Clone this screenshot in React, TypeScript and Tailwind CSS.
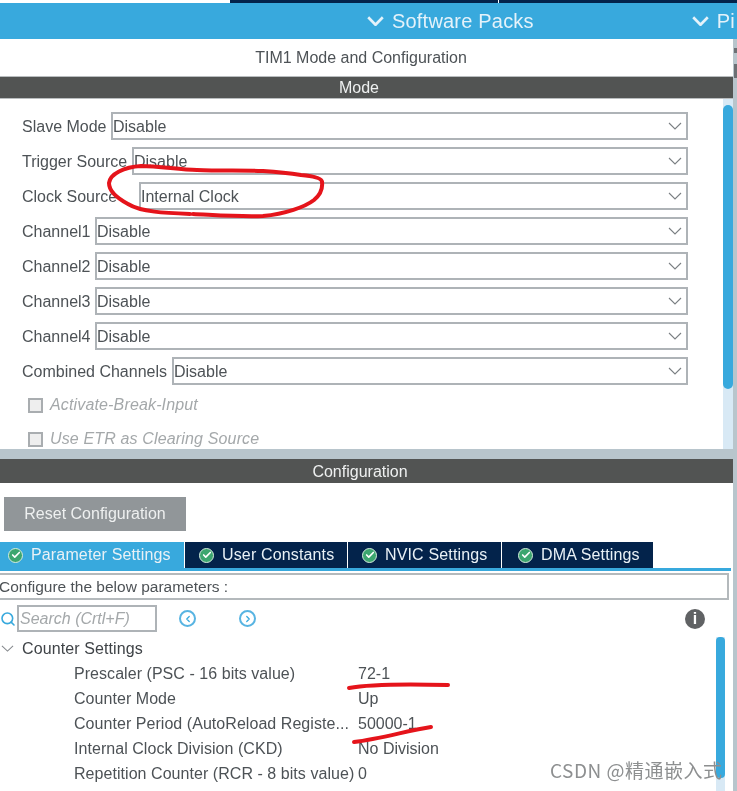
import { ChevronLeft, ChevronRight, Check, Search } from "lucide-react";

const selects = [
  { label: "Slave Mode", value: "Disable", labelWidth: "w-[89px]" },
  { label: "Trigger Source", value: "Disable", labelWidth: "w-[110px]" },
  { label: "Clock Source", value: "Internal Clock", labelWidth: "w-[117px]" },
  { label: "Channel1", value: "Disable", labelWidth: "w-[73px]" },
  { label: "Channel2", value: "Disable", labelWidth: "w-[73px]" },
  { label: "Channel3", value: "Disable", labelWidth: "w-[73px]" },
  { label: "Channel4", value: "Disable", labelWidth: "w-[73px]" },
  { label: "Combined Channels", value: "Disable", labelWidth: "w-[150px]" },
];

const tabs = [
  { label: "Parameter Settings", width: "w-[185px]", inset: "pl-[8px]", active: true },
  { label: "User Constants", width: "w-[163px]", inset: "pl-[14px]", active: false },
  { label: "NVIC Settings", width: "w-[154px]", inset: "pl-[14px]", active: false },
  { label: "DMA Settings", width: "w-[152px]", inset: "pl-[16px]", active: false },
];

const params = [
  { label: "Prescaler (PSC - 16 bits value)", value: "72-1" },
  { label: "Counter Mode", value: "Up" },
  { label: "Counter Period (AutoReload Registe...", value: "50000-1" },
  { label: "Internal Clock Division (CKD)", value: "No Division" },
  { label: "Repetition Counter (RCR - 8 bits value)", value: "0" },
];

function Chevron({ width, height, strokeWidth, className }: { width: number; height: number; strokeWidth: number; className?: string }) {
  return (
    <svg width={width} height={height} viewBox="0 0 14 8" fill="none" stroke="currentColor" strokeWidth={strokeWidth} className={className} preserveAspectRatio="none">
      <path d="M1 1l6 6 6-6" />
    </svg>
  );
}

function SelectRow({ label, value, labelWidth }: { label: string; value: string; labelWidth: string }) {
  return (
    <div className="flex h-[28px] items-center">
      <span className={`${labelWidth} shrink-0 whitespace-nowrap pt-[2px] text-[#4d5256]`}>{label}</span>
      <div className="flex h-[28px] flex-1 items-center justify-between border-2 border-[#aeb3b7] pr-[4px] text-[#4d5256]">
        <span className="pt-[2px]">{value}</span>
        <Chevron width={14} height={8} strokeWidth={1.1} className="text-[#7a7f83]" />
      </div>
    </div>
  );
}

function DisabledCheck({ label }: { label: string }) {
  return (
    <div className="flex h-[34px] items-center gap-[7px] pl-[6px]">
      <div className="h-[15px] w-[15px] border-2 border-[#a9adb0] bg-[#eeeeee]" />
      <span className="italic tracking-[0.15px] text-[#a4a8aa]">{label}</span>
    </div>
  );
}

function Tab({ label, width, inset, active }: { label: string; width: string; inset: string; active: boolean }) {
  return (
    <div
      className={`flex h-[26px] ${width} ${inset} items-center gap-[8px] border-r border-white tracking-[0.15px] text-[#e9f1f6] ${
        active ? "bg-[#38a9dd]" : "bg-[#03234b]"
      }`}
    >
      <div className="flex h-[15px] w-[15px] items-center justify-center rounded-full border border-[#d5ecdd] bg-[#3ca66f]">
        <Check size={10} strokeWidth={4} className="text-white" />
      </div>
      <span className="whitespace-nowrap">{label}</span>
    </div>
  );
}

export default function App() {
  return (
    <div className="relative h-[791px] w-[737px] overflow-hidden bg-white font-['Liberation_Sans',sans-serif] text-[16px] leading-none blur-[0.4px]">
      {/* top strip */}
      <div className="ml-[230px] flex h-[3px] gap-px bg-white">
        <div className="w-[268px] bg-[#03234b]" />
        <div className="flex-1 bg-[#03234b]" />
      </div>

      {/* software packs bar */}
      <div className="flex h-[36px] items-center bg-[#38a9dd] pl-[367px] text-[20px] tracking-[0.2px] text-[#e4f2fa]">
        <Chevron width={17} height={10} strokeWidth={2.2} className="mr-[8px] shrink-0" />
        <span>Software Packs</span>
        <Chevron width={17} height={10} strokeWidth={2.2} className="ml-[158px] mr-[8px] shrink-0" />
        <span>Pi</span>
      </div>

      <div className="flex h-[37px] items-center justify-center pr-[15px] text-[#4d5256]">TIM1 Mode and Configuration</div>

      <div className="flex h-[23px] items-center justify-center border-y border-[#b9bdbf] bg-[#525453] pr-[19px] text-[#eef0f0]">Mode</div>

      {/* mode panel */}
      <div className="flex h-[350px]">
        <div className="flex w-[723px] flex-col gap-[7px] pl-[22px] pr-[35px] pt-[13px]">
          {selects.map((s) => (
            <SelectRow key={s.label} {...s} />
          ))}
          <div className="-mt-[4px] flex flex-col">
            <DisabledCheck label="Activate-Break-Input" />
            <DisabledCheck label="Use ETR as Clearing Source" />
          </div>
        </div>
        <div className="w-[10px] bg-[#d8e9f5] pt-[6px]">
          <div className="h-[284px] rounded-[5px] bg-[#38a9dd]" />
        </div>
      </div>

      <div className="h-[10px] bg-[#b8c5cc]" />
      <div className="flex h-[24px] items-center justify-center bg-[#525453] pr-[17px] pt-[2px] text-[#eef0f0]">Configuration</div>

      <div className="pl-[4px] pt-[14px]">
        <div className="flex h-[34px] w-[182px] items-center justify-center bg-[#919699] text-[#eef0f0]">
          Reset Configuration
        </div>
      </div>

      {/* tabs */}
      <div className="mt-[11px] flex">
        {tabs.map((t) => (
          <Tab key={t.label} {...t} />
        ))}
      </div>
      <div className="mr-[6px] h-[3px] bg-[#38a9dd]" />

      <div className="-ml-[2px] mr-[8px] mt-[2px] flex h-[27px] items-center border-2 border-[#b4b9bc] text-[#4d5256]">
        <span className="-ml-[1px] text-[15.5px]">Configure the below parameters :</span>
      </div>

      {/* search row */}
      <div className="mr-[32px] mt-[5px] flex h-[27px] items-center">
        <Search size={16} strokeWidth={2.4} className="text-[#38a9dd]" />
        <div className="ml-[1px] flex h-[27px] w-[140px] items-center border-2 border-[#aeb3b7] pl-[1px] italic text-[#a4a8aa]">
          Search (Crtl+F)
        </div>
        <div className="ml-[22px] flex h-[17px] w-[17px] items-center justify-center rounded-full border-2 border-[#58b4e2]">
          <ChevronLeft size={10} strokeWidth={3} className="text-[#38a9dd]" />
        </div>
        <div className="ml-[43px] flex h-[17px] w-[17px] items-center justify-center rounded-full border-2 border-[#58b4e2]">
          <ChevronRight size={10} strokeWidth={3} className="text-[#38a9dd]" />
        </div>
        <div className="ml-auto flex h-[20px] w-[20px] items-center justify-center rounded-full bg-[#606264] text-[16px] font-bold text-white">
          i
        </div>
      </div>

      {/* counter settings */}
      <div className="flex">
        <div className="w-[716px]">
          <div className="mt-[4px] flex h-[25px] items-center tracking-[0.1px] text-[#3f4347]">
            <Chevron width={13} height={7} strokeWidth={1.1} className="ml-[1px] mr-[8px] text-[#85898d]" />
            Counter Settings
          </div>
          {params.map((p) => (
            <div key={p.label} className="flex h-[25px] items-center pl-[74px] text-[#4d5256]">
              <span className="w-[284px] shrink-0 whitespace-nowrap tracking-[0.05px]">{p.label}</span>
              <span>{p.value}</span>
            </div>
          ))}
        </div>
        <div className="mt-[5px] h-[154px] w-[9px] bg-[#d8e9f5]">
          <div className="h-[141px] rounded-[4px] bg-[#38a9dd]" />
        </div>
      </div>

      {/* gutter on the right edge, with the sash grip marks */}
      <div className="absolute bottom-0 right-0 top-[39px] flex w-[4px] flex-col bg-[#b8c5cc] pl-[1px] pt-[9px]">
        <div className="h-[5px] w-[3px] bg-[#6c7074]" />
        <div className="mt-[11px] h-[14px] w-[3px] bg-[#6c7074]" />
      </div>

      {/* watermark */}
      <div className="absolute left-[550px] top-[760px] font-['Noto_Sans_CJK_SC',sans-serif] text-[19px] tracking-[0.5px] text-[#8d8f90]">
        CSDN @精通嵌入式
      </div>

      {/* red pen marks */}
      <svg className="absolute left-0 top-0" width={737} height={791} fill="none" stroke="#e5141b" strokeWidth={4} strokeLinecap="round">
        <path d="M 190 214 C 165 213 141 212 128 204 C 115 197 109 190 109 183 C 110 174 124 167 141 166 C 160 166 180 170 197 170 C 220 171 245 170 263 171 C 280 172 295 174 301 175 C 312 176 322 178 322 182 C 323 190 320 195 314 200 C 305 207 285 214 263 216 C 240 217 215 215 193 214" />
        <path d="M 349 688 C 370 684 410 684 448 685" />
        <path d="M 354 742 C 380 739 410 730 431 727" />
      </svg>
    </div>
  );
}
